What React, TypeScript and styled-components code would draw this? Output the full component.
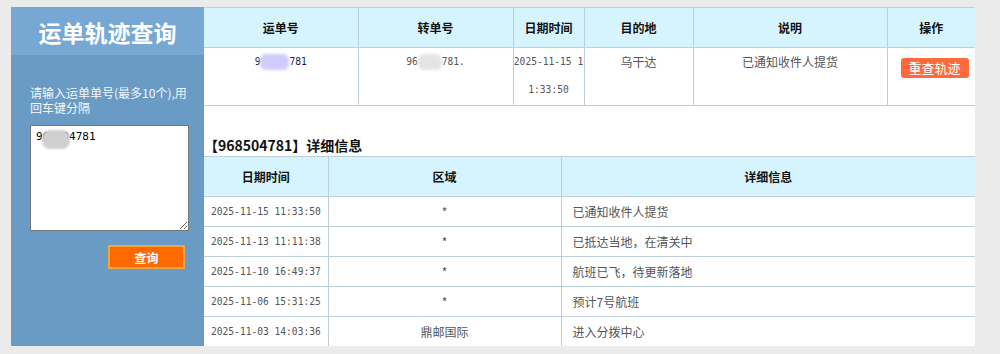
import React from "react";
import styled, { createGlobalStyle, css } from "styled-components";

const GlobalStyle = createGlobalStyle`
  body {
    margin: 0;
    background: #ebebeb;
    font-family: "Noto Sans CJK SC", "Liberation Sans", sans-serif;
  }
`;

const monoText = css`
  font-family: "DejaVu Sans Mono", "Liberation Mono", monospace;
  font-size: 9.6px;
`;

const Page = styled.div`
  display: flex;
  width: 964px;
  height: 339px;
  margin: 7px 0 0 11px;
`;

const Sidebar = styled.aside`
  width: 193px;
  flex-shrink: 0;
  background: #6a9bc4;
  display: flex;
  flex-direction: column;
`;

const SideTitle = styled.h1`
  margin: 0;
  height: 48px;
  padding-top: 2px;
  box-sizing: border-box;
  background: #76a8d3;
  color: #fff;
  font-size: 23px;
  font-weight: 700;
  line-height: 46px;
  text-align: center;
`;

const SideBody = styled.div`
  display: flex;
  flex-direction: column;
  padding: 30px 15px 0 19px;
`;

const Hint = styled.p`
  margin: 0 0 10px;
  color: #f4f7fa;
  font-size: 12px;
  line-height: 15px;
`;

const InputWrap = styled.div`
  position: relative;
  width: 159px;
  height: 106px;
`;

const NumberInput = styled.textarea`
  width: 100%;
  height: 100%;
  box-sizing: border-box;
  border: 1px solid #777;
  padding: 4px 5px;
  font-family: "DejaVu Sans Mono", "Liberation Mono", monospace;
  font-size: 11px;
  color: #000;
  outline: none;
`;

const Mask = styled.span<{ $tone: string; $w: number }>`
  display: inline-block;
  width: ${({ $w }) => $w}px;
  height: 16px;
  vertical-align: middle;
  background: ${({ $tone }) => $tone};
  border-radius: 6px;
  filter: blur(1.5px);
`;

const InputMask = styled(Mask)`
  position: absolute;
  left: 12px;
  top: 5px;
  height: 19px;
  border-radius: 8px;
  filter: blur(0.8px);
`;

const QueryButton = styled.button`
  align-self: flex-end;
  margin: 14px 4px 0 0;
  width: 77px;
  height: 24px;
  background: #ff6a00;
  border: 2px solid #f3a544;
  color: #fff;
  font-family: inherit;
  font-size: 12px;
  font-weight: 700;
  padding: 0;
`;

const Main = styled.main`
  flex: 1;
  background: #fff;
`;

const Table = styled.table`
  width: 100%;
  border-collapse: collapse;
  table-layout: fixed;
  font-size: 12px;
  color: #555;

  th,
  td {
    border: 1px solid #bccfda;
    padding: 0;
  }
  tr > :first-child {
    border-left: none;
  }
  tr > :last-child {
    border-right: none;
  }
  th {
    height: 39px;
    background: #d6f4fd;
    color: #111;
    font-weight: 700;
    text-align: center;
  }
`;

const SummaryCell = styled.td<{ $color?: string; $mono?: boolean }>`
  height: 57px;
  vertical-align: top;
  text-align: center;
  line-height: 28px;
  word-break: break-all;
  color: ${({ $color }) => $color || "#555"};
  ${({ $mono }) => $mono && monoText}
`;

const RecheckButton = styled.button`
  display: block;
  margin: 10px 0 0 13px;
  width: 68px;
  height: 20px;
  padding: 0;
  border: none;
  border-radius: 3px;
  background: #ff6a3d;
  color: #fff;
  font-family: inherit;
  font-size: 13px;
  line-height: 20px;
`;

const DetailTitle = styled.h2`
  margin: 29px 0 0;
  height: 21px;
  font-size: 14px;
  font-weight: 700;
  line-height: 20px;
  color: #111;
`;

const DetailCell = styled.td<{ $align: "left" | "center"; $pad?: number; $mono?: boolean }>`
  height: 29px;
  text-align: ${({ $align }) => $align};
  padding-left: ${({ $pad }) => $pad ?? 0}px !important;
  vertical-align: middle;
  line-height: 16px;
  ${({ $mono }) => $mono && monoText}
`;

const tracks = [
  { time: "2025-11-15 11:33:50", area: "*", info: "已通知收件人提货" },
  { time: "2025-11-13 11:11:38", area: "*", info: "已抵达当地，在清关中" },
  { time: "2025-11-10 16:49:37", area: "*", info: "航班已飞，待更新落地" },
  { time: "2025-11-06 15:31:25", area: "*", info: "预计7号航班" },
  { time: "2025-11-03 14:03:36", area: "鼎邮国际", info: "进入分拨中心" },
];

export default function App() {
  return (
    <>
      <GlobalStyle />
      <Page>
        <Sidebar>
          <SideTitle>运单轨迹查询</SideTitle>
          <SideBody>
            <Hint>请输入运单单号(最多10个),用回车键分隔</Hint>
            <InputWrap>
              <NumberInput defaultValue="968504781" />
              <InputMask $tone="#cfcfcf" $w={28} />
            </InputWrap>
            <QueryButton>查询</QueryButton>
          </SideBody>
        </Sidebar>
        <Main>
          <Table>
            <colgroup>
              <col style={{ width: 154 }} />
              <col style={{ width: 155 }} />
              <col style={{ width: 71 }} />
              <col style={{ width: 109 }} />
              <col style={{ width: 194 }} />
              <col />
            </colgroup>
            <thead>
              <tr>
                <th>运单号</th>
                <th>转单号</th>
                <th>日期时间</th>
                <th>目的地</th>
                <th>说明</th>
                <th>操作</th>
              </tr>
            </thead>
            <tbody>
              <tr>
                <SummaryCell $color="#1c1c5c" $mono>
                  9<Mask $tone="#cfcbfc" $w={29} />781
                </SummaryCell>
                <SummaryCell $mono>
                  96<Mask $tone="#e4e4e4" $w={24} />781.
                </SummaryCell>
                <SummaryCell $mono>2025-11-15 11:33:50</SummaryCell>
                <SummaryCell>乌干达</SummaryCell>
                <SummaryCell>已通知收件人提货</SummaryCell>
                <SummaryCell>
                  <RecheckButton>重查轨迹</RecheckButton>
                </SummaryCell>
              </tr>
            </tbody>
          </Table>
          <DetailTitle>【968504781】详细信息</DetailTitle>
          <Table>
            <colgroup>
              <col style={{ width: 124 }} />
              <col style={{ width: 233 }} />
              <col />
            </colgroup>
            <thead>
              <tr>
                <th>日期时间</th>
                <th>区域</th>
                <th>详细信息</th>
              </tr>
            </thead>
            <tbody>
              {tracks.map((t) => (
                <tr key={t.time}>
                  <DetailCell $align="left" $pad={7} $mono>
                    {t.time}
                  </DetailCell>
                  <DetailCell $align="center">{t.area}</DetailCell>
                  <DetailCell $align="left" $pad={11}>
                    {t.info}
                  </DetailCell>
                </tr>
              ))}
            </tbody>
          </Table>
        </Main>
      </Page>
    </>
  );
}
